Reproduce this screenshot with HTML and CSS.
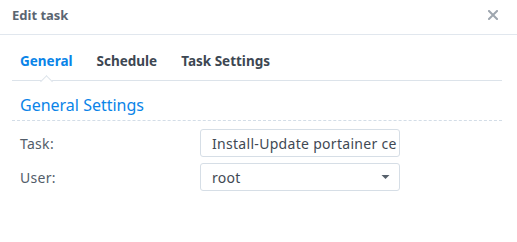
FILE: index.html
```html
<!DOCTYPE html>
<html lang="en">
<head>
    <meta charset="UTF-8">
    <title>Edit task</title>
    <link rel="stylesheet" href="styles.css">
</head>
<body>
    <div class="dialog">
        <div class="header">
            <span class="title">Edit task</span>
            <svg class="close" viewBox="0 0 10 10">
                <path d="M1 1L9 9M9 1L1 9" stroke="currentColor" stroke-width="2" stroke-linecap="square"/>
            </svg>
        </div>

        <div class="tabs">
            <span class="tab active">General</span>
            <span class="tab">Schedule</span>
            <span class="tab">Task Settings</span>
        </div>

        <div class="section">
            <div class="section-title">General Settings</div>

            <div class="form">
                <div class="form-row">
                    <label class="field-label">Task:</label>
                    <div class="field">Install-Update portainer ce</div>
                </div>
                <div class="form-row">
                    <label class="field-label">User:</label>
                    <div class="field select">
                        <span>root</span>
                        <svg class="caret" viewBox="0 0 8 4">
                            <path d="M0 0H8L4 4Z" fill="currentColor"/>
                        </svg>
                    </div>
                </div>
            </div>
        </div>
    </div>
</body>
</html>
```

FILE: styles.css
```css
* {
    margin: 0;
    padding: 0;
    box-sizing: border-box;
}

body {
    font-family: "Noto Sans", "Open Sans", sans-serif;
    font-size: 13px;
    background: white;
    color: #4f5a66;
}

.dialog {
    width: 517px;
    height: 242px;
    background: white;
}

.header {
    height: 35px;
    border-bottom: 1px solid #e1e7ee;
    padding: 0 19px 4px 12px;
    display: flex;
    align-items: center;
    justify-content: space-between;
}

.title {
    font-weight: bold;
    color: #5b6571;
}

.close {
    width: 10px;
    height: 10px;
    color: #9ea6af;
}

.tabs {
    margin: 0 15px 0 12px;
    padding: 6px 8px 0;
    height: 46px;
    border-bottom: 1px solid #dce3ea;
    display: flex;
    align-items: center;
    gap: 24px;
}

.tab {
    position: relative;
    font-size: 13.5px;
    font-weight: bold;
    color: #3d4752;
}

.tab.active {
    color: #0a84e8;
}

.tab.active::after {
    content: "";
    position: absolute;
    left: 50%;
    bottom: -16px;
    width: 8px;
    height: 8px;
    margin-left: -4px;
    background: white;
    border-top: 1px solid #dce3ea;
    border-left: 1px solid #dce3ea;
    transform: rotate(45deg);
}

.section {
    margin: 0 15px 0 12px;
}

.section-title {
    margin-top: 14px;
    padding: 0 8px 5px;
    line-height: 20px;
    font-size: 16px;
    color: #0a84e8;
    border-bottom: 1px dashed #d3dde7;
}

.form {
    padding-top: 8px;
    display: flex;
    flex-direction: column;
    gap: 6px;
}

.form-row {
    display: flex;
    align-items: center;
}

.field-label {
    width: 188px;
    padding-left: 8px;
    font-size: 14px;
    letter-spacing: 0.3px;
    color: #525d69;
}

.field {
    width: 200px;
    height: 28px;
    border: 1px solid #d6dee6;
    border-radius: 3px;
    padding: 0 11px;
    display: flex;
    align-items: center;
    font-size: 14px;
    letter-spacing: 0.3px;
    color: #3f4954;
    white-space: nowrap;
    overflow: hidden;
}

.select {
    justify-content: space-between;
}

.caret {
    width: 9px;
    height: 4px;
    color: #56606b;
    margin-right: -2px;
}
```
